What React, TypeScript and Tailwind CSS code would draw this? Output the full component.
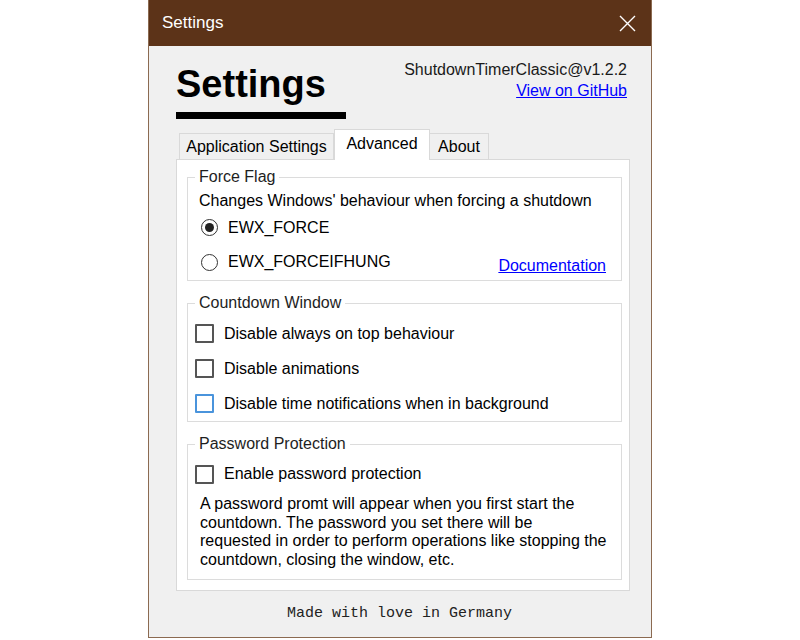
import { ReactNode } from "react";

const sans = "font-['Liberation_Sans',Arial,sans-serif]";

function Radio({ checked, label }: { checked?: boolean; label: string }) {
  return (
    <div className="flex items-center">
      <span className="ml-[6px] flex h-[17px] w-[17px] items-center justify-center rounded-full border border-[#333] bg-white">
        {checked && <span className="h-[9px] w-[9px] rounded-full bg-[#222]" />}
      </span>
      <span className="ml-[10px]">{label}</span>
    </div>
  );
}

function Checkbox({ label, focused }: { label: string; focused?: boolean }) {
  return (
    <div className="flex h-[35px] items-center">
      <span
        className={
          focused
            ? "h-[19px] w-[19px] rounded-[1px] border-2 border-[#4a94dc] bg-white"
            : "h-[19px] w-[19px] rounded-[1px] border-2 border-[#555] bg-white"
        }
      />
      <span className="ml-[10px]">{label}</span>
    </div>
  );
}

function Group({ title, className, children }: { title: string; className?: string; children: ReactNode }) {
  return (
    <fieldset className={`border border-[#dcdcdc] px-[7px] ${className ?? ""}`}>
      <legend className="px-[4px] leading-[18px] text-[#1e1e1e]">{title}</legend>
      {children}
    </fieldset>
  );
}

export default function App() {
  return (
    <div className={`flex h-[640px] w-[800px] justify-center bg-white text-[16px] text-black ${sans}`}>
      <div className="flex h-[638px] w-[504px] flex-col border border-t-0 border-[#8b6a51] bg-[#f0f0f0]">
        {/* title bar */}
        <div className="flex h-[46px] shrink-0 items-center justify-between bg-[#5c3318] pl-[13px] pr-[15px]">
          <span className="text-[17px] text-white">Settings</span>
          <svg width="17" height="17" viewBox="0 0 17 17" className="text-white">
            <path d="M1 1 L16 16 M16 1 L1 16" stroke="currentColor" strokeWidth="1.4" fill="none" />
          </svg>
        </div>

        <div className="flex flex-1 flex-col pl-[27px] pr-[21px] pt-[13px]">
          {/* header */}
          <div className="flex items-start justify-between">
            <div className="mt-[6px]">
              <h1 className="text-[38px] font-bold leading-none">Settings</h1>
              <div className="mt-[9px] h-[7px] w-[170px] bg-black" />
            </div>
            <div className="mr-[3px] text-right leading-[21px] text-[#1a1a1a]">
              <p>ShutdownTimerClassic@v1.2.2</p>
              <a className="text-[#0000ff] underline">View on GitHub</a>
            </div>
          </div>

          {/* tabs */}
          <div className="relative z-10 mt-[10px] -mb-px flex h-[31px] items-end pl-[3px] leading-none">
            <div className="flex h-[27px] w-[155px] items-center justify-center border border-[#d9d9d9] bg-[#f0f0f0]">
              Application Settings
            </div>
            <div className="flex h-[31px] w-[96px] items-center justify-center border border-b-0 border-[#d9d9d9] bg-white pb-[2px]">
              Advanced
            </div>
            <div className="flex h-[27px] w-[59px] items-center justify-center border border-l-0 border-[#d9d9d9] bg-[#f0f0f0]">
              About
            </div>
          </div>

          {/* tab panel */}
          <div className="border border-[#d9d9d9] bg-white pb-[10px] pl-[10px] pr-[7px] pt-[8px]">
            <Group title="Force Flag" className="pb-[1px]">
              <p className="ml-[4px] mt-[6px] leading-[18px]">Changes Windows' behaviour when forcing a shutdown</p>
              <div className="flex h-[35px] items-center">
                <Radio checked label="EWX_FORCE" />
              </div>
              <div className="flex h-[34px] items-center justify-between pr-[8px]">
                <Radio label="EWX_FORCEIFHUNG" />
                <a className="mt-[8px] text-[#0000ff] underline">Documentation</a>
              </div>
            </Group>

            <Group title="Countdown Window" className="mt-[13px]">
              <div className="mt-[4px]">
                <Checkbox label="Disable always on top behaviour" />
                <Checkbox label="Disable animations" />
                <Checkbox focused label="Disable time notifications when in background" />
              </div>
            </Group>

            <Group title="Password Protection" className="mt-[13px] pb-[10px]">
              <div className="mt-[4px] flex h-[34px] items-center">
                <span className="h-[19px] w-[19px] rounded-[1px] border-2 border-[#555] bg-white" />
                <span className="ml-[10px]">Enable password protection</span>
              </div>
              <p className="ml-[5px] mt-[4px] leading-[18.5px]">
                A password promt will appear when you first start the
                <br />
                countdown. The password you set there will be
                <br />
                requested in order to perform operations like stopping the
                <br />
                countdown, closing the window, etc.
              </p>
            </Group>
          </div>

          {/* footer */}
          <div className="flex flex-1 items-center justify-center pr-[7px] pt-[1px] font-['Liberation_Mono',monospace] text-[15px] text-[#222]">
            Made with love in Germany
          </div>
        </div>
      </div>
    </div>
  );
}
